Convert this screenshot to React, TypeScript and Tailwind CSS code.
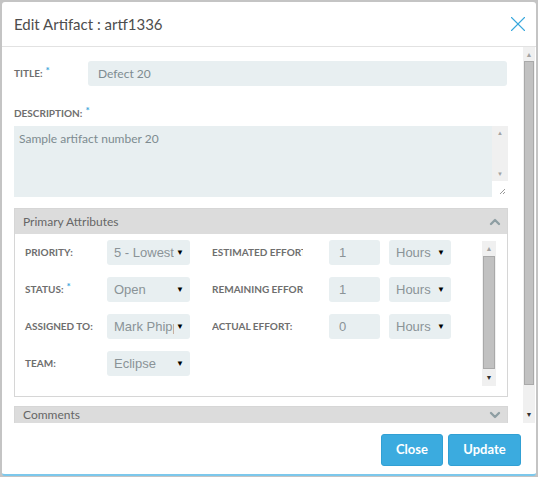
import { ChevronUp, ChevronDown, X } from 'lucide-react'

function Req() {
  return <span className="relative -top-[3px] ml-[3px] text-[#3aa8dc]">*</span>
}

function Label({ text, req, w, clip }: { text: string; req?: boolean; w: string; clip?: boolean }) {
  return (
    <div
      className={`${w} shrink-0 whitespace-nowrap text-[10px] font-bold text-[#6e6e6e] ${clip ? 'overflow-hidden' : ''}`}
    >
      {text}
      {req && <Req />}
    </div>
  )
}

function Select({ value, w }: { value: string; w: string }) {
  return (
    <div
      className={`${w} flex h-[25px] shrink-0 items-center justify-between overflow-hidden rounded-[3px] bg-[#e8eff1] pl-[7px] pr-[6px] font-['Liberation_Sans',Arial,sans-serif] text-[13px] text-[#8a9397]`}
    >
      <span className="overflow-hidden whitespace-nowrap">{value}</span>
      <span className="ml-[2px] text-[8px] text-black">▼</span>
    </div>
  )
}

function NumInput({ value }: { value: string }) {
  return (
    <div className="flex h-[25px] w-[51px] shrink-0 items-center rounded-[3px] bg-[#e8eff1] pl-[10px] font-['Liberation_Sans',Arial,sans-serif] text-[13px] text-[#8a9397]">
      {value}
    </div>
  )
}

function Scrollbar({ thumbTop, thumbBottom, className }: { thumbTop: string; thumbBottom: string; className: string }) {
  return (
    <div className={`${className} flex shrink-0 flex-col bg-[#f0f0f0]`}>
      <div className={`${thumbTop} flex shrink-0 items-center justify-center`}>
        <span className="text-[7px] leading-none text-[#a3a3a3]">▲</span>
      </div>
      <div className="mx-[1px] flex-1 border border-[#a9a9a9] bg-[#c1c1c1]" />
      <div className={`${thumbBottom} flex shrink-0 items-end justify-center pb-[5px]`}>
        <span className="text-[7px] leading-none text-[#333]">▼</span>
      </div>
    </div>
  )
}

export default function App() {
  const rows = [
    { l: 'PRIORITY:', v: '5 - Lowest', l2: 'ESTIMATED EFFORT:', n: '1' },
    { l: 'STATUS:', req: true, v: 'Open', l2: 'REMAINING EFFORT:', n: '1' },
    { l: 'ASSIGNED TO:', v: 'Mark Phipps', l2: 'ACTUAL EFFORT:', n: '0' },
    { l: 'TEAM:', v: 'Eclipse' }
  ]

  return (
    <div className="h-[477px] w-[538px] bg-[#c4c4c4] px-[2px] pt-[2px] pb-[1px] font-['Lato','Open_Sans',sans-serif]">
      <div className="flex h-full flex-col overflow-hidden rounded-[3px] border-b-2 border-[#7cc8ec] bg-white">
        {/* Header */}
        <div className="flex h-[45px] shrink-0 items-center justify-between border-b border-[#e2e2e2] pl-[12px] pr-[5px]">
          <h1 className="text-[15px] text-[#4d4d4d]">Edit Artifact : artf1336</h1>
          <X size={26} strokeWidth={1} className="text-[#3aa8dc]" />
        </div>

        {/* Body */}
        <div className="flex h-[376px] shrink-0 overflow-hidden">
          <div className="flex-1 pl-[12px] pr-[15px] pt-[14px]">
            <div className="flex items-center">
              <Label text="TITLE:" req w="w-[74px]" />
              <div className="mr-px flex h-[25px] flex-1 items-center rounded-[3px] bg-[#e8eff1] pl-[10px] text-[12px] text-[#7d8b90]">
                Defect 20
              </div>
            </div>

            <div className="mt-[20px]">
              <Label text="DESCRIPTION:" req w="w-full" />
            </div>
            <div className="mt-[5px] flex h-[71px] bg-[#e8eff1]">
              <div className="flex-1 pl-[5px] pt-[4px] text-[12px] text-[#7d8b90]">Sample artifact number 20</div>
              <div className="flex w-[16px] flex-col">
                <div className="flex flex-1 flex-col items-center justify-between bg-[#f0f0f0] py-[4px]">
                  <span className="text-[6px] leading-none text-[#a3a3a3]">▲</span>
                  <span className="text-[6px] leading-none text-[#a3a3a3]">▼</span>
                </div>
                <div className="relative h-[16px] bg-white">
                  <svg width="16" height="16" className="absolute left-0 top-0">
                    <path d="M13 8 L8 13 M13 11 L11 13" stroke="#999" strokeWidth="1" />
                  </svg>
                </div>
              </div>
            </div>

            {/* Primary Attributes */}
            <div className="mt-[11px] border border-[#d6d6d6]">
              <div className="flex h-[25px] items-center justify-between bg-[#dcdcdc] pl-[8px] pr-[4px] text-[12px] text-[#666]">
                <span>Primary Attributes</span>
                <ChevronUp size={16} strokeWidth={3.5} className="text-[#8e9ea3]" />
              </div>
              <div className="flex h-[162px] bg-white pl-[10px] pt-[6px]">
                <div className="flex w-[457px] flex-col gap-[12px]">
                  {rows.map((r) => (
                    <div key={r.l} className="flex items-center">
                      <Label text={r.l} req={r.req} w="w-[82px]" />
                      <Select value={r.v} w="w-[83px]" />
                      {r.l2 && (
                        <>
                          <div className="ml-[22px]">
                            <Label text={r.l2} w="w-[91px]" clip />
                          </div>
                          <div className="ml-[26px]">
                            <NumInput value={r.n!} />
                          </div>
                          <div className="ml-[9px]">
                            <Select value="Hours" w="w-[62px]" />
                          </div>
                        </>
                      )}
                    </div>
                  ))}
                </div>
                <Scrollbar className="mt-px h-[145px] w-[14px]" thumbTop="h-[15px]" thumbBottom="h-[17px]" />
              </div>
            </div>

            {/* Comments */}
            <div className="mt-[9px] flex h-[26px] items-center justify-between border border-[#d6d6d6] bg-[#dcdcdc] pl-[8px] pr-[4px] text-[12px] text-[#666]">
              <span className="-mt-[8px]">Comments</span>
              <ChevronDown size={16} strokeWidth={3.5} className="-mt-[8px] text-[#8e9ea3]" />
            </div>
          </div>

          <Scrollbar className="h-full w-[12px]" thumbTop="h-[14px]" thumbBottom="h-[38px]" />
          <div className="w-px shrink-0" />
        </div>

        {/* Footer */}
        <div className="flex flex-1 items-start justify-end gap-[5px] pr-[15px] pt-[11px]">
          <button className="h-[32px] w-[62px] rounded-[3px] border border-[#31a0d4] bg-[#3babdf] text-[13px] font-bold text-white">
            Close
          </button>
          <button className="h-[32px] w-[73px] rounded-[3px] border border-[#31a0d4] bg-[#3babdf] text-[13px] font-bold text-white">
            Update
          </button>
        </div>
      </div>
    </div>
  )
}
